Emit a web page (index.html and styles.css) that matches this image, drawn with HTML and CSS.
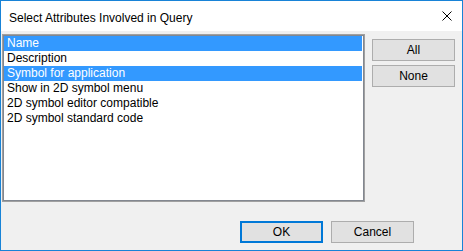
FILE: index.html
```html
<!DOCTYPE html>
<html>
	<head>
		<meta charset="utf-8" />
		<title>Select Attributes Involved in Query</title>
		<link rel="stylesheet" href="styles.css">
	</head>
	<body>
		<div class="window">
			<div class="titlebar">
				<span class="title">Select Attributes Involved in Query</span>
				<span class="close">
					<svg width="10" height="10" viewBox="0 0 10 10">
						<path d="M0.5 0.5 L9.5 9.5 M9.5 0.5 L0.5 9.5" stroke="#000" stroke-width="1" fill="none"/>
					</svg>
				</span>
			</div>
			<div class="content">
				<div class="main">
					<div class="listbox">
						<div class="item selected">Name</div>
						<div class="item">Description</div>
						<div class="item selected">Symbol for application</div>
						<div class="item">Show in 2D symbol menu</div>
						<div class="item">2D symbol editor compatible</div>
						<div class="item">2D symbol standard code</div>
					</div>
					<div class="side">
						<button class="btn">All</button>
						<button class="btn">None</button>
					</div>
				</div>
				<div class="footer">
					<button class="btn default">OK</button>
					<button class="btn">Cancel</button>
				</div>
			</div>
		</div>
	</body>
</html>
```

FILE: styles.css
```css
html, body{
	margin: 0;
	padding: 0;
}
body{
	font-family: "Liberation Sans", Arial, sans-serif;
	font-size: 12px;
	color: #000;
}
.window{
	box-sizing: border-box;
	width: 463px;
	height: 251px;
	border: 1px solid #1883d7;
	background: #f0f0f0;
	display: flex;
	flex-direction: column;
}
.titlebar{
	height: 30px;
	background: #fff;
	display: flex;
	align-items: center;
	justify-content: space-between;
	padding: 0 10px 0 8px;
}
.title{
	font-size: 12px;
	padding-top: 3px;
}
.close svg{
	display: block;
}
.content{
	flex: 1;
	padding: 3px 7px 0 1px;
	display: flex;
	flex-direction: column;
}
.main{
	display: flex;
	gap: 7px;
}
.listbox{
	box-sizing: border-box;
	width: 363px;
	height: 168px;
	background: #fff;
	border: 1px solid #a0a0a0;
	box-shadow: inset 1px 1px 0 #828790, inset -1px -1px 0 #828790;
	padding: 1px 2px 1px 1px;
}
.item{
	height: 15px;
	line-height: 15px;
	padding-left: 3px;
	white-space: nowrap;
}
.item.selected{
	background: #3399ff;
	color: #fff;
}
.side{
	display: flex;
	flex-direction: column;
	gap: 4px;
	padding-top: 5px;
}
.btn{
	box-sizing: border-box;
	width: 83px;
	height: 22px;
	margin: 0;
	padding: 0;
	background: #e1e1e1;
	border: 1px solid #adadad;
	font-family: inherit;
	font-size: 12px;
	color: #000;
}
.btn.default{
	border: 2px solid #0078d7;
}
.footer{
	display: flex;
	justify-content: flex-end;
	gap: 8px;
	margin-top: 19px;
	padding-right: 41px;
}
```
